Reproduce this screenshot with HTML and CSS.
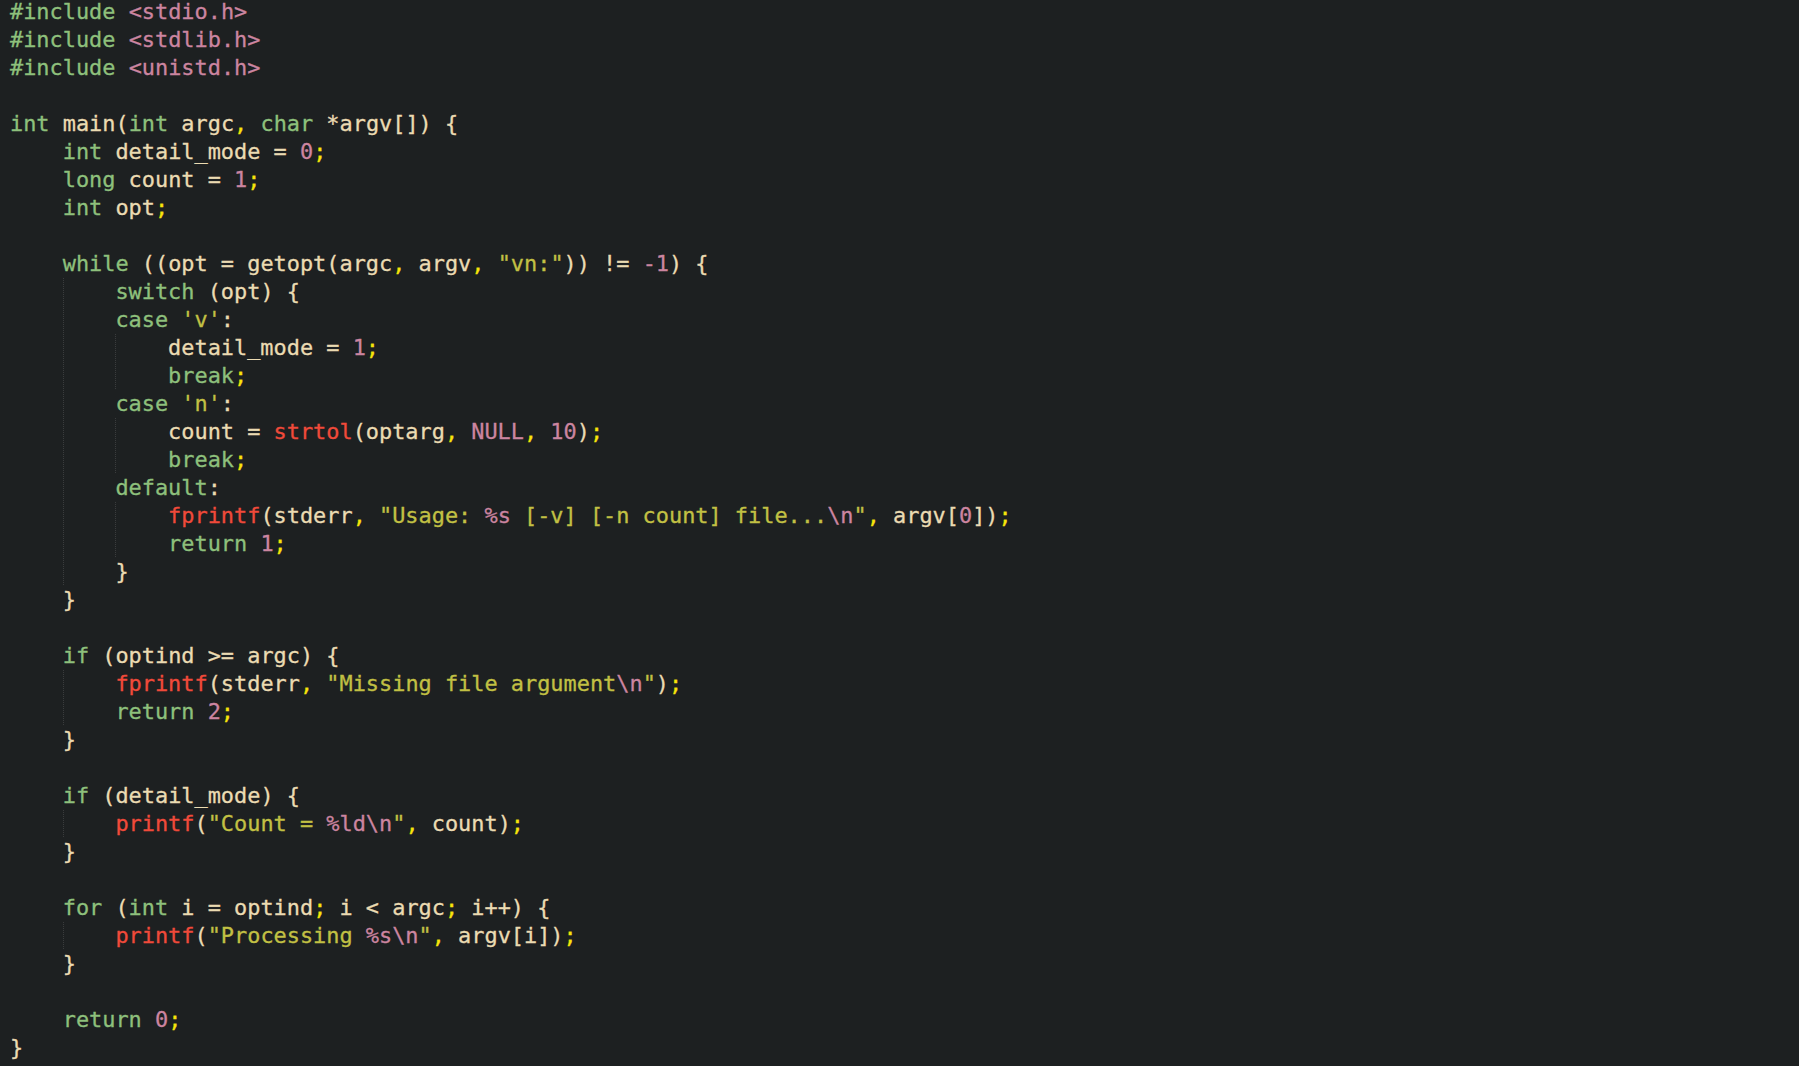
FILE: index.html
```html
<!DOCTYPE html>
<html lang="en">
<head>
<meta charset="utf-8">
<title>main.c</title>
<link rel="stylesheet" href="styles.css">
</head>
<body>
<div class="editor">
<div class="ln"><span class="k">#include</span> <span class="n">&lt;stdio.h&gt;</span></div>
<div class="ln"><span class="k">#include</span> <span class="n">&lt;stdlib.h&gt;</span></div>
<div class="ln"><span class="k">#include</span> <span class="n">&lt;unistd.h&gt;</span></div>
<div class="ln"> </div>
<div class="ln"><span class="k">int</span> main(<span class="k">int</span> argc<span class="p">,</span> <span class="k">char</span> *argv[]) {</div>
<div class="ln"><span class="in">    </span><span class="k">int</span> detail_mode = <span class="n">0</span><span class="p">;</span></div>
<div class="ln"><span class="in">    </span><span class="k">long</span> count = <span class="n">1</span><span class="p">;</span></div>
<div class="ln"><span class="in">    </span><span class="k">int</span> opt<span class="p">;</span></div>
<div class="ln"> </div>
<div class="ln"><span class="in">    </span><span class="k">while</span> ((opt = getopt(argc<span class="p">,</span> argv<span class="p">,</span> <span class="s">"vn:"</span>)) != <span class="n">-1</span>) {</div>
<div class="ln"><span class="in">    </span><span class="in g">    </span><span class="k">switch</span> (opt) {</div>
<div class="ln"><span class="in">    </span><span class="in g">    </span><span class="k">case</span> <span class="s">'v'</span>:</div>
<div class="ln"><span class="in">    </span><span class="in g">    </span><span class="in g">    </span>detail_mode = <span class="n">1</span><span class="p">;</span></div>
<div class="ln"><span class="in">    </span><span class="in g">    </span><span class="in g">    </span><span class="k">break</span><span class="p">;</span></div>
<div class="ln"><span class="in">    </span><span class="in g">    </span><span class="k">case</span> <span class="s">'n'</span>:</div>
<div class="ln"><span class="in">    </span><span class="in g">    </span><span class="in g">    </span>count = <span class="f">strtol</span>(optarg<span class="p">,</span> <span class="n">NULL</span><span class="p">,</span> <span class="n">10</span>)<span class="p">;</span></div>
<div class="ln"><span class="in">    </span><span class="in g">    </span><span class="in g">    </span><span class="k">break</span><span class="p">;</span></div>
<div class="ln"><span class="in">    </span><span class="in g">    </span><span class="k">default</span>:</div>
<div class="ln"><span class="in">    </span><span class="in g">    </span><span class="in g">    </span><span class="f">fprintf</span>(stderr<span class="p">,</span> <span class="s">"Usage: <span class="n">%s</span> [-v] [-n count] file...<span class="n">\n</span>"</span><span class="p">,</span> argv[<span class="n">0</span>])<span class="p">;</span></div>
<div class="ln"><span class="in">    </span><span class="in g">    </span><span class="in g">    </span><span class="k">return</span> <span class="n">1</span><span class="p">;</span></div>
<div class="ln"><span class="in">    </span><span class="in g">    </span>}</div>
<div class="ln"><span class="in">    </span>}</div>
<div class="ln"> </div>
<div class="ln"><span class="in">    </span><span class="k">if</span> (optind &gt;= argc) {</div>
<div class="ln"><span class="in">    </span><span class="in g">    </span><span class="f">fprintf</span>(stderr<span class="p">,</span> <span class="s">"Missing file argument<span class="n">\n</span>"</span>)<span class="p">;</span></div>
<div class="ln"><span class="in">    </span><span class="in g">    </span><span class="k">return</span> <span class="n">2</span><span class="p">;</span></div>
<div class="ln"><span class="in">    </span>}</div>
<div class="ln"> </div>
<div class="ln"><span class="in">    </span><span class="k">if</span> (detail_mode) {</div>
<div class="ln"><span class="in">    </span><span class="in g">    </span><span class="f">printf</span>(<span class="s">"Count = <span class="n">%ld\n</span>"</span><span class="p">,</span> count)<span class="p">;</span></div>
<div class="ln"><span class="in">    </span>}</div>
<div class="ln"> </div>
<div class="ln"><span class="in">    </span><span class="k">for</span> (<span class="k">int</span> i = optind<span class="p">;</span> i &lt; argc<span class="p">;</span> i++) {</div>
<div class="ln"><span class="in">    </span><span class="in g">    </span><span class="f">printf</span>(<span class="s">"Processing <span class="n">%s\n</span>"</span><span class="p">,</span> argv[i])<span class="p">;</span></div>
<div class="ln"><span class="in">    </span>}</div>
<div class="ln"> </div>
<div class="ln"><span class="in">    </span><span class="k">return</span> <span class="n">0</span><span class="p">;</span></div>
<div class="ln">}</div>
</div>
</body>
</html>
```

FILE: styles.css
```css
html, body {
  margin: 0;
  padding: 0;
  background: #1d2021;
  height: 100%;
  overflow: hidden;
}

.editor {
  margin-top: -2px;
  padding-left: 10px;
  font-family: "DejaVu Sans Mono", "Liberation Mono", monospace;
  font-size: 21.9px;
  line-height: 28px;
  color: #ebdbb2;
  -webkit-text-stroke: 0.3px currentColor;
}

.ln {
  height: 28px;
  white-space: pre;
}

.in {
  display: inline-block;
  width: 4ch;
  height: 28px;
  vertical-align: top;
}

.in.g {
  background-image: linear-gradient(to bottom, #3a3c3d 50%, transparent 50%);
  background-size: 1px 2px;
  background-repeat: repeat-y;
  background-position: 0 0;
}

.k { color: #8ec07c; }
.f { color: #f04a3a; }
.s { color: #c2c044; }
.n { color: #cc85a0; }
.p { color: #f7e40a; }
```
